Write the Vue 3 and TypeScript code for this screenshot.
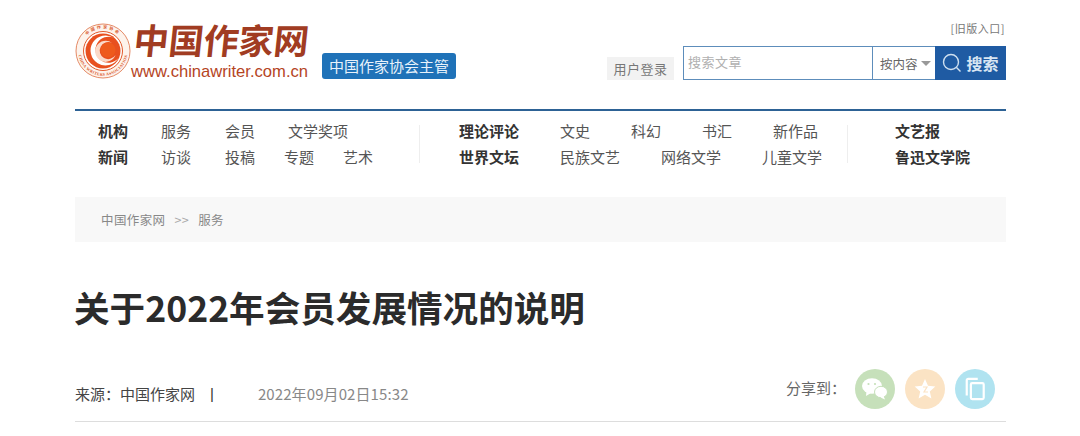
<script setup lang="ts">
interface NavLink {
  label: string;
  bold?: boolean;
  tight?: boolean;
}

const leftRows: NavLink[][] = [
  [{ label: '机构', bold: true }, { label: '服务' }, { label: '会员' }, { label: '文学奖项' }],
  [{ label: '新闻', bold: true }, { label: '访谈' }, { label: '投稿' }, { label: '专题', tight: true }, { label: '艺术', tight: true }],
];
const midRows: string[][] = [
  ['文史', '科幻', '书汇', '新作品'],
  ['民族文艺', '网络文学', '儿童文学'],
];
</script>

<template>
  <div class="page">
    <header class="top">
      <a class="logo">
        <svg class="emblem" width="56" height="56" viewBox="0 0 56 56">
          <defs>
            <path id="ringTop" d="M5.500 28a22.500 22.500 0 0 1 45 0" fill="none" />
            <path id="ringBottom" d="M3.200 28a24.800 24.800 0 0 0 49.600 0" fill="none" />
          </defs>
          <circle cx="28" cy="28" r="27" fill="#fdf3ec" stroke="#e58a66" stroke-width="1" />
          <circle cx="28" cy="28" r="19.500" fill="#fff" stroke="#e2592a" stroke-width="1" />
          <circle cx="28" cy="28" r="17.500" fill="#e8501f" />
          <path d="M39 15a15 15 0 1 0 4.500 20a13 13 0 1 1-4.500-20z" fill="#fff" />
          <path d="M37 20a10.500 10.500 0 1 0 3.500 12a8.500 8.500 0 1 1-3.500-12z" fill="#fbd9c8" />
          <circle cx="33" cy="27" r="7.500" fill="#ee5a1c" />
          <text class="ring-text"><textPath href="#ringTop" startOffset="50%" text-anchor="middle">中国作家协会</textPath></text>
          <text class="ring-latin"><textPath href="#ringBottom" startOffset="50%" text-anchor="middle">CHINA WRITERS ASSOCIATION</textPath></text>
        </svg>
        <div class="logo-words">
          <div class="logo-cn">中国作家网</div>
          <div class="logo-url">www.chinawriter.com.cn</div>
        </div>
      </a>
      <span class="tag">中国作家协会主管</span>
      <div class="tools">
        <a class="old-link">[旧版入口]</a>
        <div class="search-row">
          <a class="login">用户登录</a>
          <div class="search">
            <span class="search-input">搜索文章</span>
            <span class="search-type">按内容<i class="caret"></i></span>
            <button class="search-btn">
              <svg width="20" height="20" viewBox="0 0 20 20" fill="none" stroke="#cfe0f0" stroke-width="1.400">
                <circle cx="9" cy="9" r="7.500" />
                <path d="M14.500 14.500l4 4" />
              </svg>
              <span>搜索</span>
            </button>
          </div>
        </div>
      </div>
    </header>

    <nav class="nav">
      <div class="nav-group group-left">
        <div v-for="(row, i) in leftRows" :key="i" class="nav-row">
          <a
            v-for="link in row"
            :key="link.label"
            :class="{ strong: link.bold, tight: link.tight }"
          >{{ link.label }}</a>
        </div>
      </div>
      <div class="nav-group group-mid">
        <div class="nav-row">
          <a class="strong lead">理论评论</a>
          <a v-for="name in midRows[0]" :key="name">{{ name }}</a>
        </div>
        <div class="nav-row">
          <a class="strong lead">世界文坛</a>
          <a v-for="name in midRows[1]" :key="name">{{ name }}</a>
        </div>
      </div>
      <div class="nav-group group-right">
        <div class="nav-row"><a class="strong">文艺报</a></div>
        <div class="nav-row"><a class="strong">鲁迅文学院</a></div>
      </div>
    </nav>

    <div class="crumbs">
      <a>中国作家网</a>
      <span class="sep">&gt;&gt;</span>
      <a>服务</a>
    </div>

    <h1 class="title">关于2022年会员发展情况的说明</h1>

    <div class="meta">
      <div class="source">
        <span>来源：中国作家网</span>
        <span class="bar">|</span>
        <span class="date">2022年09月02日15:32</span>
      </div>
      <div class="share">
        <span class="share-label">分享到：</span>
        <a class="share-btn green">
          <svg width="26" height="22" viewBox="0 0 26 22" fill="#fff">
            <ellipse cx="10" cy="8" rx="10" ry="7.800" />
            <path d="M4.500 13l-.5 5 5-3z" />
            <circle cx="6.500" cy="6" r="1.100" fill="#c6e0ba" />
            <circle cx="13" cy="6" r="1.100" fill="#c6e0ba" />
            <ellipse cx="19" cy="14" rx="6.500" ry="5.700" stroke="#c6e0ba" stroke-width="1" />
            <path d="M21.500 18l1.500 3.500-4.500-2z" />
          </svg>
        </a>
        <a class="share-btn orange">
          <svg width="24" height="24" viewBox="0 0 24 24">
            <path d="M12 2l3 6.800 7.300.7-5.500 4.900 1.600 7.200L12 17.800l-6.400 3.800 1.600-7.200L1.700 9.500 9 8.800z" fill="#fff" />
            <path d="M10 10h4l-3 5h4" fill="none" stroke="#fbe3c4" stroke-width="1.200" />
          </svg>
        </a>
        <a class="share-btn blue">
          <svg width="22" height="24" viewBox="0 0 24 26" fill="none" stroke="#fff" stroke-width="2.400">
            <rect x="7.500" y="6.500" width="14" height="17.500" rx="1.500" />
            <path d="M3 20V3.500a1.500 1.500 0 0 1 1.500-1.500H15" />
          </svg>
        </a>
      </div>
    </div>
  </div>
</template>

<style>
html,
body {
  margin: 0;
  background: #fff;
}
</style>

<style scoped>
.page {
  width: 931px;
  margin-left: 75px;
  height: 436px;
  overflow: hidden;
  font-family: 'Noto Sans CJK SC', sans-serif;
  color: #333;
}

.top {
  display: flex;
  align-items: flex-end;
  height: 109px;
  border-bottom: 2px solid #2d6295;
}

.logo {
  display: flex;
  align-items: center;
  width: 233px;
  height: 68px;
  margin-bottom: 25px;
}

.emblem {
  flex: none;
  margin: 2px 0 0 0;
}

.ring-text {
  font-size: 4px;
  font-weight: 700;
  fill: #d9552a;
  letter-spacing: 2px;
}

.ring-latin {
  font-family: 'Liberation Serif', serif;
  font-size: 4px;
  font-weight: 700;
  fill: #d9552a;
  letter-spacing: 0.300px;
}

.logo-cn {
  font-size: 35px;
  line-height: 40px;
  font-weight: 700;
  color: #a13c22;
  white-space: nowrap;
  margin-left: 3px;
  transform: skewX(-6deg);
}

.logo-url {
  font-family: 'Liberation Sans', sans-serif;
  font-size: 16.600px;
  line-height: 20px;
  color: #b5451f;
  white-space: nowrap;
  margin-top: 3px;
}

.tag {
  flex: none;
  width: 134px;
  height: 26px;
  margin: 0 0 30px 14px;
  border-radius: 3px;
  background: #1f72b8;
  color: #e8f2fb;
  font-size: 15px;
  line-height: 26px;
  text-align: center;
}

.tools {
  margin-left: auto;
  display: flex;
  flex-direction: column;
  align-items: flex-end;
  margin-bottom: 29px;
}

.old-link {
  font-size: 11px;
  line-height: 14px;
  color: #777;
  margin: 0 1px 11px 0;
  letter-spacing: 0.500px;
}

.search-row {
  display: flex;
  align-items: flex-end;
}

.login {
  width: 67px;
  height: 23px;
  margin-right: 9px;
  background: #f2f2f2;
  color: #777;
  font-size: 13px;
  line-height: 23px;
  text-align: center;
  letter-spacing: 0.500px;
}

.search {
  display: flex;
  width: 323px;
  height: 34px;
}

.search-input {
  width: 189px;
  box-sizing: border-box;
  border: 1px solid #5d8dbb;
  border-right: 0;
  padding-left: 4px;
  color: #b0b0b0;
  font-size: 13px;
  line-height: 30px;
  letter-spacing: 0.500px;
}

.search-type {
  display: flex;
  align-items: center;
  width: 63px;
  padding-left: 7px;
  box-sizing: border-box;
  border: 1px solid #5d8dbb;
  border-right: 0;
  color: #666;
  font-size: 12.500px;
}

.caret {
  width: 0;
  height: 0;
  margin-left: 3px;
  border-left: 5px solid transparent;
  border-right: 5px solid transparent;
  border-top: 5px solid #999;
}

.search-btn {
  display: flex;
  align-items: center;
  justify-content: center;
  gap: 4px;
  flex: 1;
  border: 0;
  padding: 0;
  background: #1f5ba3;
  color: #d8e6f3;
  font-family: inherit;
  font-size: 16px;
  font-weight: 700;
}

.nav {
  display: flex;
  height: 86px;
}

.nav-group {
  display: flex;
  flex-direction: column;
  gap: 6px;
  padding-top: 10px;
}

.nav-row {
  display: flex;
  height: 20px;
  font-size: 15px;
  line-height: 20px;
  color: #555;
  white-space: nowrap;
}

.nav-row a + a {
  margin-left: 33px;
}

.nav-row a:nth-child(3) {
  margin-left: 34px;
}

.nav-row a.tight {
  margin-left: 29px;
}

.strong {
  font-weight: 700;
  color: #333;
}

.group-left {
  width: 345px;
  padding-left: 23px;
  box-sizing: border-box;
}

.group-left,
.group-mid {
  position: relative;
}

.group-left::after,
.group-mid::after {
  content: '';
  position: absolute;
  right: 0;
  top: 14px;
  height: 38px;
  width: 1px;
  background: #eee;
}

.group-mid {
  width: 428px;
  padding-left: 39px;
  box-sizing: border-box;
}

.group-mid .nav-row a + a {
  margin-left: 41px;
}

.group-right {
  padding-left: 47px;
}

.crumbs {
  display: flex;
  align-items: center;
  height: 45px;
  padding-left: 26px;
  background: #f8f8f8;
  font-size: 12.500px;
  color: #888;
  letter-spacing: 0.400px;
}

.sep {
  margin: 0 9px;
  color: #aaa;
}

.title {
  margin: 41px 0 0 -1px;
  font-size: 35.600px;
  line-height: 48px;
  font-weight: 700;
  color: #2b2b2b;
}

.meta {
  display: flex;
  justify-content: space-between;
  align-items: center;
  height: 40px;
  margin-top: 38px;
  padding: 0 11px 12px 0;
  border-bottom: 1px solid #ddd;
}

.source {
  display: flex;
  align-items: center;
  font-size: 15px;
  color: #444;
  padding-top: 8px;
}

.bar {
  margin-left: 15px;
  color: #333;
  font-family: 'Liberation Sans', sans-serif;
}

.date {
  margin-left: 44px;
  color: #888;
  letter-spacing: 0.100px;
}

.share {
  display: flex;
  align-items: center;
}

.share-label {
  font-size: 15px;
  color: #666;
  margin-right: 3px;
  width: 66px;
  overflow: hidden;
  white-space: nowrap;
  margin-bottom: 4px;
}

.share-btn {
  display: flex;
  align-items: center;
  justify-content: center;
  width: 40px;
  height: 40px;
  border-radius: 50%;
}

.share-btn + .share-btn {
  margin-left: 10px;
}

.green {
  background: #c6e0ba;
}

.orange {
  background: #fbe3c4;
}

.blue {
  background: #b0e3f0;
}
</style>
